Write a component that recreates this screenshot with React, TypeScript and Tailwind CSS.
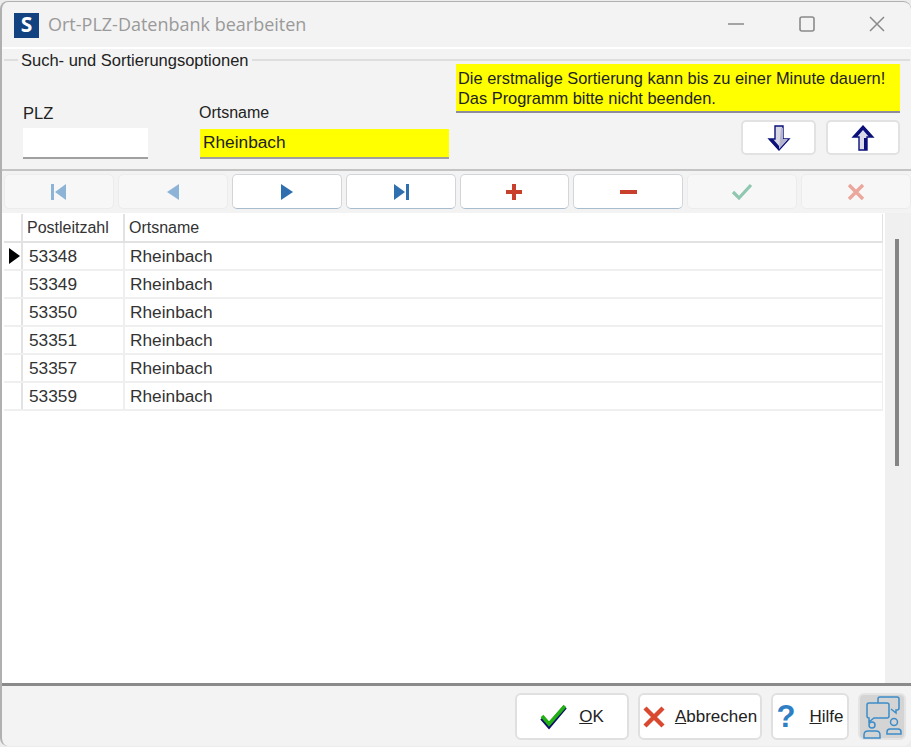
import { ReactNode } from 'react';

const NAV_ICONS: { icon: ReactNode; enabled: boolean }[] = [
  {
    enabled: false,
    icon: (
      <svg width="18" height="18" viewBox="0 0 18 18">
        <rect x="1" y="1" width="3" height="16" fill="#8db4d6" />
        <path d="M16 1v16L5 9z" fill="#8db4d6" />
      </svg>
    ),
  },
  {
    enabled: false,
    icon: (
      <svg width="14" height="18" viewBox="0 0 14 18">
        <path d="M13 1v16L1 9z" fill="#8db4d6" />
      </svg>
    ),
  },
  {
    enabled: true,
    icon: (
      <svg width="14" height="18" viewBox="0 0 14 18">
        <path d="M1 1v16L13 9z" fill="#2f6fb0" />
      </svg>
    ),
  },
  {
    enabled: true,
    icon: (
      <svg width="18" height="18" viewBox="0 0 18 18">
        <path d="M2 1v16L13 9z" fill="#2f6fb0" />
        <rect x="14" y="1" width="3" height="16" fill="#2f6fb0" />
      </svg>
    ),
  },
  {
    enabled: true,
    icon: (
      <svg width="18" height="18" viewBox="0 0 18 18">
        <path d="M7 1h4v6h6v4h-6v6H7v-6H1V7h6z" fill="#c8402c" />
      </svg>
    ),
  },
  {
    enabled: true,
    icon: (
      <svg width="18" height="18" viewBox="0 0 18 18">
        <rect x="1" y="7" width="17" height="4" fill="#c8402c" />
      </svg>
    ),
  },
  {
    enabled: false,
    icon: (
      <svg width="22" height="18" viewBox="0 0 22 18">
        <path d="M2 9l6 6L20 2" fill="none" stroke="#8fc7b0" strokeWidth="3.2" />
      </svg>
    ),
  },
  {
    enabled: false,
    icon: (
      <svg width="18" height="18" viewBox="0 0 18 18">
        <path d="M2 2l14 14M16 2L2 16" fill="none" stroke="#eba79c" strokeWidth="3.4" />
      </svg>
    ),
  },
];

const ROWS = ['53348', '53349', '53350', '53351', '53357', '53359'];

function NavButton({ enabled, children }: { enabled: boolean; children: ReactNode }) {
  return (
    <button
      className={`h-[35px] flex items-center justify-center rounded-[5px] border ${
        enabled ? 'bg-white border-[#d2d6da] border-b-[#a9bccd]' : 'bg-[#f7f7f7] border-[#ececec]'
      }`}
    >
      {children}
    </button>
  );
}

function FooterButton({ width, children }: { width: string; children: ReactNode }) {
  return (
    <button
      className={`${width} h-[47px] flex items-center justify-center rounded-[6px] bg-white border-2 border-[#e0e0e0] text-[17px] text-[#222]`}
    >
      {children}
    </button>
  );
}

export default function App() {
  return (
    <div className="w-[911px] h-[747px] overflow-hidden bg-[#ececec] font-['Liberation_Sans',sans-serif]">
      <div className="w-[911px] h-[745px] mt-[1px] flex flex-col rounded-[8px] bg-[#f3f3f3] border-t border-l-2 border-[#b0b0b0] overflow-hidden">
        {/* Title bar */}
        <div className="h-[47px] shrink-0 flex items-center pl-[12px] border-b-2 border-white">
          <div className="w-[25px] h-[25px] flex items-center justify-center bg-[#12427f] text-white text-[21px] font-bold font-['Open_Sans',sans-serif] mt-[1px]">
            S
          </div>
          <span className="ml-[9px] text-[18px] text-[#9a9a9a] font-['Open_Sans',sans-serif]">
            Ort-PLZ-Datenbank bearbeiten
          </span>
          <div className="ml-auto flex items-center mr-[26px] -mt-[1px] gap-[54.5px] text-[#8a8a8a]">
            <svg width="16" height="16" viewBox="0 0 16 16">
              <path d="M0 8h16" stroke="currentColor" strokeWidth="1.6" />
            </svg>
            <svg width="16" height="16" viewBox="0 0 16 16">
              <rect x="1" y="1" width="14" height="14" rx="2" fill="none" stroke="currentColor" strokeWidth="1.6" />
            </svg>
            <svg width="16" height="16" viewBox="0 0 16 16">
              <path d="M1 1l14 14M15 1L1 15" stroke="currentColor" strokeWidth="1.5" />
            </svg>
          </div>
        </div>

        {/* Search and sort options */}
        <fieldset className="shrink-0 h-[120px] border-t-2 border-[#dedede] ml-[2px] mr-[1px] flex justify-between">
          <legend className="ml-[14px] px-[3px] text-[16.5px] leading-[22px] text-[#222] h-[22px]">
            Such- und Sortierungsoptionen
          </legend>
          <div className="flex pt-[32px] pl-[19px] gap-[51px]">
            <div className="flex flex-col">
              <label className="text-[16.5px] leading-[20px] text-[#222]">PLZ</label>
              <div className="w-[125px] h-[31px] mt-[5px] bg-white border-b-2 border-[#a0a0a0]" />
            </div>
            <div className="flex flex-col">
              <label className="text-[16px] leading-[20px] text-[#222]">Ortsname</label>
              <div className="w-[249px] h-[30px] mt-[6px] ml-[1px] pl-[3px] bg-[#ffff00] border-b-2 border-[#a0a0a0] text-[17.3px] leading-[27px] text-[#222]">
                Rheinbach
              </div>
            </div>
          </div>
          <div className="flex flex-col items-end pr-[10px] -mt-[7px]">
            <div className="w-[444px] h-[49px] pl-[2px] pt-[4px] bg-[#ffff00] border-b-2 border-[#8c8c9c] text-[16.4px] leading-[20px] text-[#222]">
              Die erstmalige Sortierung kann bis zu einer Minute dauern!
              <br />
              Das Programm bitte nicht beenden.
            </div>
            <div className="flex gap-[10px] mt-[7px]">
              <button className="w-[75px] h-[35px] flex items-center justify-center bg-white rounded-[5px] border-2 border-[#e2e2e2]">
                <svg width="24" height="26" viewBox="0 0 24 26">
                  <path d="M8 1h8v13h6L12 25 2 14h6z" fill="#d8d8e4" stroke="#0a0f7a" strokeWidth="1.4" />
                  <path d="M14 3h2v11h5l-9 10z" fill="#b4b4cc" />
                  <path d="M2 14l10 11v-4l-6-7z" fill="#0a0f7a" />
                </svg>
              </button>
              <button className="w-[74px] h-[35px] flex items-center justify-center bg-white rounded-[5px] border-2 border-[#e2e2e2]">
                <svg width="24" height="26" viewBox="0 0 24 26">
                  <path d="M12 1l10 11h-6v13H8V12H2z" fill="#dcdce8" stroke="#0a0f7a" strokeWidth="1.4" />
                  <path d="M2 12L12 1l10 11h-4L12 5l-6 7z" fill="#0a0f7a" />
                  <path d="M13 13h3v12h-3z" fill="#0a0f7a" />
                </svg>
              </button>
            </div>
          </div>
        </fieldset>

        {/* Navigator */}
        <div className="shrink-0 h-[44px] border-t-2 border-[#c4c4c4] pt-[3px] pl-[2px] grid grid-cols-8 gap-[4px]">
          {NAV_ICONS.map((item, i) => (
            <NavButton key={i} enabled={item.enabled}>
              {item.icon}
            </NavButton>
          ))}
        </div>

        {/* Table */}
        <div className="flex-1 min-h-0 flex bg-white">
          <div className="w-[881px] pl-[2px] pt-[1px]">
            <div className="flex h-[29px] border-b-2 border-[#e2e2e2] text-[16px] text-[#333] leading-[27px]">
              <div className="w-[19px] border-r-2 border-[#e2e2e2]" />
              <div className="w-[102px] pl-[4px] border-r-2 border-[#e2e2e2]">Postleitzahl</div>
              <div className="flex-1 pl-[4px] border-r border-[#e2e2e2]">Ortsname</div>
            </div>
            {ROWS.map((plz, i) => (
              <div key={plz} className="flex h-[28px] border-b-2 border-[#efefef] text-[17.3px] text-[#333] leading-[26px]">
                <div className="w-[19px] flex items-center pl-[5px] border-r-2 border-[#e2e2e2]">
                  {i === 0 && (
                    <svg width="11" height="16" viewBox="0 0 11 16">
                      <path d="M0 0v16l11-8z" fill="#000" />
                    </svg>
                  )}
                </div>
                <div className="w-[102px] pl-[6px] border-r-2 border-[#efefef]">{plz}</div>
                <div className="flex-1 pl-[5px] border-r border-[#efefef]">Rheinbach</div>
              </div>
            ))}
          </div>
          <div className="ml-[2px] flex-1 bg-[#f0f0f0] flex pl-[10px] pt-[26px]">
            <div className="w-[4px] h-[227px] bg-[#858585]" />
          </div>
        </div>

        {/* Footer */}
        <div className="shrink-0 h-[63px] border-t-[3px] border-[#8a8a8a] flex items-start pt-[7px] pl-[513px] gap-[9px]">
          <FooterButton width="w-[114px]">
            <svg width="28" height="26" viewBox="0 0 28 26" className="mr-[11px]">
              <path d="M2 14l7 8L25 3" fill="none" stroke="#0a0f6a" strokeWidth="4.5" />
              <path d="M2 12l7 8L25 2" fill="none" stroke="#22b014" strokeWidth="3.5" />
            </svg>
            <span>
              <span className="underline">O</span>K
            </span>
          </FooterButton>
          <FooterButton width="w-[124px]">
            <svg width="22" height="22" viewBox="0 0 22 22" className="mr-[10px]">
              <path d="M2 2l18 18M20 2L2 20" stroke="#d8492f" strokeWidth="4.4" />
            </svg>
            <span>
              <span className="underline">A</span>bbrechen
            </span>
          </FooterButton>
          <FooterButton width="w-[78px]">
            <span className="mr-[14px] text-[31px] leading-none font-bold text-[#2f7fc4]">?</span>
            <span>
              <span className="underline">H</span>ilfe
            </span>
          </FooterButton>
          <button className="w-[48px] h-[47px] flex items-center justify-center rounded-[6px] bg-[#d4d4d4] border-2 border-[#e4e4e4]">
            <svg width="42" height="44" viewBox="0 0 42 44" fill="none" stroke="#3c8cc8" strokeWidth="1.5" className="shrink-0">
              <path d="M17 8V4q0-2 2-2h17q2 0 2 2v9q0 2-2 2h-1v3l-5-4" />
              <path d="M6 10q0-2 2-2h18q2 0 2 2v11q0 2-2 2H13l-5 4v-4q-2 0-2-2z" />
              <circle cx="11" cy="30" r="3" />
              <path d="M3 43v-3q0-4 4-4h8q4 0 4 4v3z" />
              <circle cx="33" cy="27" r="3.5" />
              <path d="M26 39v-2q0-3 3-3h8q3 0 3 3v2z" />
            </svg>
          </button>
        </div>
      </div>
    </div>
  );
}
